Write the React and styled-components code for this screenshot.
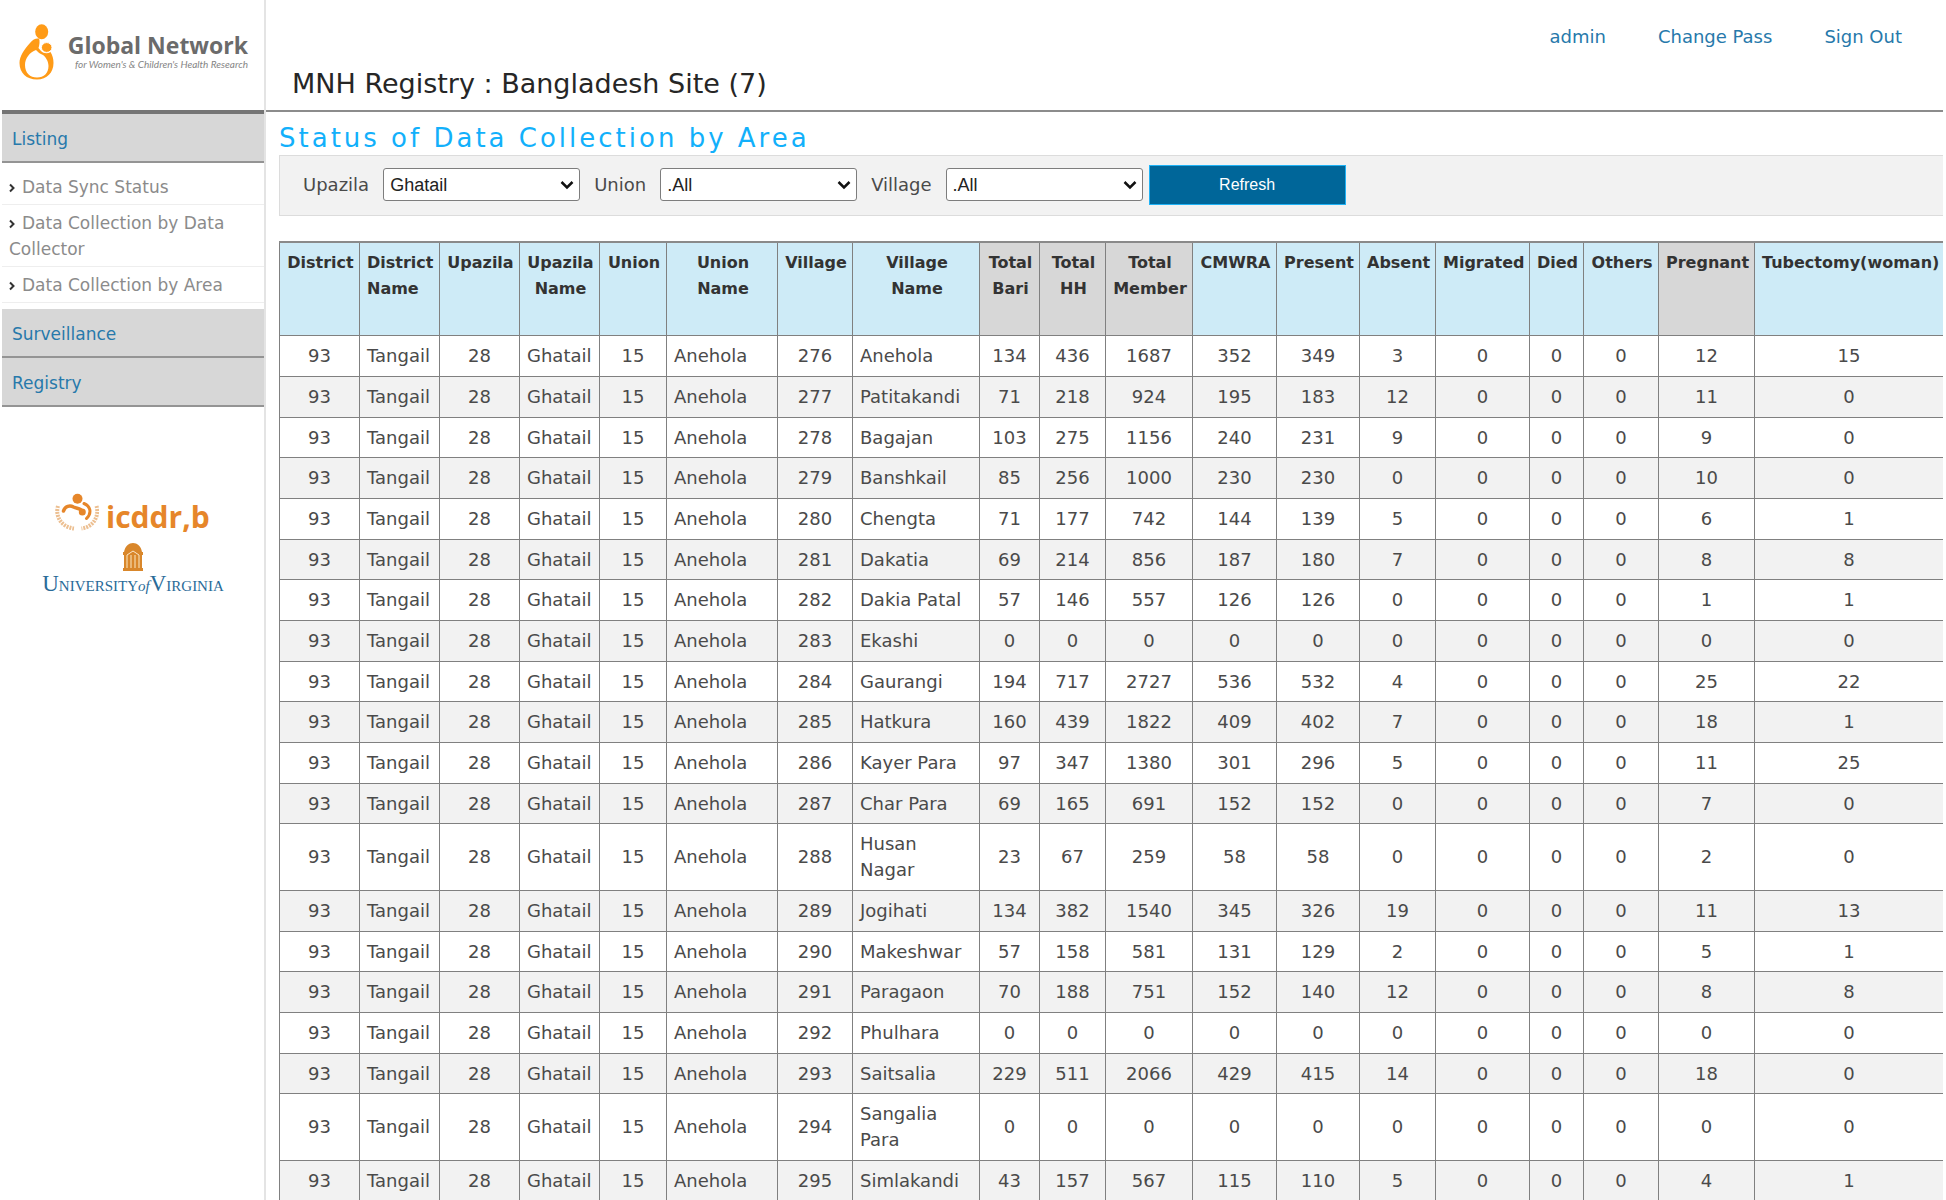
import React from "react";
import styled, { createGlobalStyle } from "styled-components";

const GlobalStyle = createGlobalStyle`
  *, *::before, *::after { box-sizing: border-box; }
  body {
    margin: 0;
    background: #fff;
    color: #4a4a4a;
    font-family: "DejaVu Sans", Verdana, sans-serif;
    font-size: 18px;
    line-height: 26px;
  }
  #root { height: 100vh; overflow: hidden; }
`;

const Page = styled.div`
  display: flex;
  min-height: 100vh;
  padding: 0 3px 0 2px;
`;

const Sidebar = styled.aside`
  flex: none;
  width: 264px;
  border-right: 2px solid #e4e4e4;
  font-size: 17px;
`;

const Brand = styled.div`
  display: flex;
  justify-content: space-between;
  height: 110px;
  padding: 24px 16px 0 17px;

  svg { flex: none; }
`;

const BrandText = styled.div`
  display: flex;
  flex-direction: column;
  align-items: flex-end;
  padding-top: 8px;
  color: #6b6b6b;
  font-family: "Open Sans", "Noto Sans", sans-serif;
  white-space: nowrap;
`;

const BrandName = styled.span`
  font-size: 23px;
  font-weight: 700;
  line-height: 26px;
`;

const BrandTagline = styled.span`
  color: #858585;
  font-family: Lato, "Open Sans", sans-serif;
  font-size: 10px;
  font-style: italic;
  line-height: 12px;
`;

const Menu = styled.nav`
  border-top: 4px solid #757575;
`;

const MenuHead = styled.a`
  display: block;
  height: 49px;
  padding: 12px 10px 9px;
  border-bottom: 2px solid #949494;
  background: #d7d7d7;
  color: #2779ab;
  text-decoration: none;
`;

const SubMenu = styled.ul`
  margin: 0;
  padding: 6px 0;
  list-style: none;
`;

const SubItem = styled.li`
  padding: 5px 7px 4px;
  border-bottom: 1px solid #eee;
`;

const SubLink = styled.a`
  color: #8b8b8b;
  text-decoration: none;
`;

const Chevron = styled.svg`
  width: 6px;
  height: 10px;
  margin-right: 7px;
`;

const Partners = styled.div`
  display: flex;
  flex-direction: column;
  padding: 86px 0 0 45px;
`;

const Icddrb = styled.div`
  display: flex;
  gap: 7px;
  height: 50px;
  padding-left: 8px;
  color: #e6862a;
  font-family: "Open Sans", sans-serif;
  font-size: 30px;
  font-weight: 700;
  line-height: 48px;
`;

const Virginia = styled.div`
  display: flex;
  flex-direction: column;
  width: 172px;
  align-items: center;
  color: #2a6b98;
  font-family: "Liberation Serif", serif;
  font-size: 15px;
  line-height: 26px;
  white-space: nowrap;
`;

const Cap = styled.span`
  font-size: 23px;
`;

const Of = styled.i`
  font-size: 15px;
`;

const Main = styled.main`
  flex: 1;
  min-width: 0;
`;

const TopBar = styled.header`
  display: flex;
  justify-content: space-between;
  height: 112px;
  padding: 0 41px 0 26px;
  border-bottom: 2px solid #8c8c8c;
`;

const SiteTitle = styled.h1`
  align-self: flex-end;
  margin: 0 0 9px;
  color: #262626;
  font-size: 27px;
  font-weight: 400;
  line-height: 34px;
`;

const Account = styled.nav`
  display: flex;
  gap: 52px;
  padding-top: 24px;
`;

const AccountLink = styled.a`
  color: #2779ab;
  text-decoration: none;
`;

const Content = styled.div`
  padding-left: 13px;
`;

const PageTitle = styled.h2`
  margin: 0;
  padding-top: 9px;
  color: #12b0fb;
  font-size: 26px;
  font-weight: 400;
  letter-spacing: 3px;
  line-height: 34px;
`;

const Filters = styled.form`
  display: flex;
  align-items: center;
  height: 61px;
  margin-bottom: 25px;
  padding: 0 23px 2px;
  border: 1px solid #dcdcdc;
  border-right: 0;
  background: #f2f2f2;
`;

const Label = styled.label`
  margin-right: 14px;
`;

const SelectBox = styled.span`
  position: relative;
  width: 197px;
  margin-right: ${(p) => (p.$last ? "6px" : "14px")};
`;

const Select = styled.select`
  display: block;
  width: 100%;
  height: 33px;
  padding: 0 24px 0 6px;
  appearance: none;
  border: 1px solid #7d7d7d;
  border-radius: 3px;
  background: #fff;
  color: #222;
  font: 18px/24px "Liberation Sans", Arial, sans-serif;
`;

const Arrow = styled.svg`
  position: absolute;
  top: 12px;
  right: 6px;
  width: 14px;
  height: 10px;
  pointer-events: none;
`;

const Refresh = styled.button`
  width: 197px;
  height: 40px;
  border: 1px solid #1fb2f5;
  background: #006699;
  color: #fff;
  font: 16px/24px "Liberation Sans", Arial, sans-serif;
`;

const Table = styled.table`
  width: 100%;
  table-layout: fixed;
  border-collapse: collapse;
  border-top: 2px solid #8a8a8a;

  td, th { border-right: 1px solid #808080; border-bottom: 1px solid #808080; }
  td:last-child, th:last-child { border-right: 0; }
  td:first-child, th:first-child { border-left: 1px solid #808080; }
`;

const HeadCell = styled.th`
  height: 93px;
  padding: 7px 5px 7px 7px;
  background: ${(p) => (p.$grey ? "#d7d7d7" : "#ceebf7")};
  color: #333;
  font-size: 16px;
  text-align: ${(p) => (p.$left ? "left" : "center")};
  vertical-align: top;
`;

const Row = styled.tr`
  &:nth-child(even) { background: #f2f2f2; }
  &:nth-child(3n) td { padding-bottom: 6px; }
`;

const Cell = styled.td`
  padding: 7px ${(p) => (p.$left ? "7px" : "0")};
  text-align: ${(p) => (p.$left ? "left" : "center")};
`;

const COLUMNS = [
  { title: "District", width: 80 },
  { title: "District Name", width: 80, left: true, headLeft: true },
  { title: "Upazila", width: 80 },
  { title: "Upazila Name", width: 80, left: true },
  { title: "Union", width: 67 },
  { title: "Union Name", width: 111, left: true },
  { title: "Village", width: 75 },
  { title: "Village Name", width: 127, left: true },
  { title: "Total Bari", width: 60, grey: true },
  { title: "Total HH", width: 66, grey: true },
  { title: "Total Member", width: 87, grey: true },
  { title: "CMWRA", width: 84 },
  { title: "Present", width: 83 },
  { title: "Absent", width: 76 },
  { title: "Migrated", width: 94 },
  { title: "Died", width: 54 },
  { title: "Others", width: 75 },
  { title: "Pregnant", width: 96, grey: true },
  { title: "Tubectomy(woman)" },
];

// village code, village, bari, HH, member, CMWRA, present, absent, migrated, died, others, pregnant, tubectomy
const VILLAGES = [
  [276, "Anehola", 134, 436, 1687, 352, 349, 3, 0, 0, 0, 12, 15],
  [277, "Patitakandi", 71, 218, 924, 195, 183, 12, 0, 0, 0, 11, 0],
  [278, "Bagajan", 103, 275, 1156, 240, 231, 9, 0, 0, 0, 9, 0],
  [279, "Banshkail", 85, 256, 1000, 230, 230, 0, 0, 0, 0, 10, 0],
  [280, "Chengta", 71, 177, 742, 144, 139, 5, 0, 0, 0, 6, 1],
  [281, "Dakatia", 69, 214, 856, 187, 180, 7, 0, 0, 0, 8, 8],
  [282, "Dakia Patal", 57, 146, 557, 126, 126, 0, 0, 0, 0, 1, 1],
  [283, "Ekashi", 0, 0, 0, 0, 0, 0, 0, 0, 0, 0, 0],
  [284, "Gaurangi", 194, 717, 2727, 536, 532, 4, 0, 0, 0, 25, 22],
  [285, "Hatkura", 160, 439, 1822, 409, 402, 7, 0, 0, 0, 18, 1],
  [286, "Kayer Para", 97, 347, 1380, 301, 296, 5, 0, 0, 0, 11, 25],
  [287, "Char Para", 69, 165, 691, 152, 152, 0, 0, 0, 0, 7, 0],
  [288, "Husan Nagar", 23, 67, 259, 58, 58, 0, 0, 0, 0, 2, 0],
  [289, "Jogihati", 134, 382, 1540, 345, 326, 19, 0, 0, 0, 11, 13],
  [290, "Makeshwar", 57, 158, 581, 131, 129, 2, 0, 0, 0, 5, 1],
  [291, "Paragaon", 70, 188, 751, 152, 140, 12, 0, 0, 0, 8, 8],
  [292, "Phulhara", 0, 0, 0, 0, 0, 0, 0, 0, 0, 0, 0],
  [293, "Saitsalia", 229, 511, 2066, 429, 415, 14, 0, 0, 0, 18, 0],
  [294, "Sangalia Para", 0, 0, 0, 0, 0, 0, 0, 0, 0, 0, 0],
  [295, "Simlakandi", 43, 157, 567, 115, 110, 5, 0, 0, 0, 4, 1],
];

const FILTERS = [
  { id: "upazila", label: "Upazila", value: "Ghatail" },
  { id: "union", label: "Union", value: ".All" },
  { id: "village", label: "Village", value: ".All" },
];

const LISTING = ["Data Sync Status", "Data Collection by Data Collector", "Data Collection by Area"];

function MotherChildMark() {
  return (
    <svg width="35" height="57" viewBox="0 0 35 57" aria-hidden="true">
      <ellipse cx="22.700" cy="7.700" rx="6.500" ry="7.500" fill="#ff9b17" />
      <path
        d="M20 14.500C17 14 14 15 11 19 5 26 0.500 32 0.500 39c0 10 7 16.500 17.500 16.500 10 0 16.500-7 16.500-16.500 0-4-1-8-3-11-3 2-7 1.500-9.500-1L19.500 24C20.500 21 21 17 20 14.500z"
        fill="#ff9b17"
      />
      <ellipse cx="27.700" cy="23.500" rx="5.300" ry="4.900" fill="#ff9b17" stroke="#fff" strokeWidth="1" />
      <path d="M17 26c-6 2-11 8-11 15 0 8 5 12.500 12 12.500S29.500 49 29.500 42c0-5-3-9-5.500-11-3-1-5-3-7-5z" fill="#fff" />
    </svg>
  );
}

function WreathMark() {
  return (
    <svg width="44" height="38" viewBox="0 0 44 38" aria-hidden="true" fill="none" stroke="#e6862a">
      <path
        d="M3 13C0 23 6 34 19 35.500M41.500 13c3 10-3 21-15 22.500"
        stroke="#ecbf91"
        strokeWidth="4"
        strokeDasharray="2 1"
      />
      <circle cx="22.500" cy="5.700" r="5" fill="#e6862a" stroke="none" />
      <circle cx="27.300" cy="19" r="3.500" fill="#e6862a" stroke="none" />
      <path d="M8.500 18C10 13 15 12 18.500 14c3 1.500 5 1 7 2.500" strokeWidth="3.500" strokeLinecap="round" />
      <path d="M29 10.500c6 2.500 8.500 9 2.500 15" strokeWidth="3" strokeLinecap="round" />
    </svg>
  );
}

function RotundaMark() {
  return (
    <svg width="20" height="28" viewBox="0 0 20 28" aria-hidden="true" fill="#d9872b">
      <path d="M1 9C2 3 6 0 10 0s8 3 9 9z" />
      <path d="M0 9h20v3H0zM0 25h20v3H0z" />
      <path d="M1 12h18v13H1z" fill="#eab877" />
      <path d="M1 12h2v13H1zM5 12h2v13H5zM9 12h2v13H9zM13 12h2v13h-2zM17 12h2v13h-2z" />
      <path d="M4 12l6-4 6 4" fill="none" stroke="#fbe6c8" />
    </svg>
  );
}

export default function App() {
  return (
    <>
      <GlobalStyle />
      <Page>
        <Sidebar>
          <Brand>
            <MotherChildMark />
            <BrandText>
              <BrandName>Global Network</BrandName>
              <BrandTagline>for Women's &amp; Children's Health Research</BrandTagline>
            </BrandText>
          </Brand>
          <Menu>
            <MenuHead href="#listing">Listing</MenuHead>
            <SubMenu>
              {LISTING.map((item) => (
                <SubItem key={item}>
                  <Chevron viewBox="0 0 6 10" aria-hidden="true">
                    <path d="M1 1.500L4.500 5L1 8.500" fill="none" stroke="#333" strokeWidth="2" />
                  </Chevron>
                  <SubLink href="#item">{item}</SubLink>
                </SubItem>
              ))}
            </SubMenu>
            <MenuHead href="#surveillance">Surveillance</MenuHead>
            <MenuHead href="#registry">Registry</MenuHead>
          </Menu>
          <Partners>
            <Icddrb>
              <WreathMark />
              <span>icddr,b</span>
            </Icddrb>
            <Virginia>
              <RotundaMark />
              <span>
                <Cap>U</Cap>NIVERSITY<Of>of</Of>
                <Cap>V</Cap>IRGINIA
              </span>
            </Virginia>
          </Partners>
        </Sidebar>
        <Main>
          <TopBar>
            <SiteTitle>MNH Registry : Bangladesh Site (7)</SiteTitle>
            <Account>
              <AccountLink href="#admin">admin</AccountLink>
              <AccountLink href="#password">Change Pass</AccountLink>
              <AccountLink href="#signout">Sign Out</AccountLink>
            </Account>
          </TopBar>
          <Content>
            <PageTitle>Status of Data Collection by Area</PageTitle>
            <Filters onSubmit={(e) => e.preventDefault()}>
              {FILTERS.map((f, i) => (
                <React.Fragment key={f.id}>
                  <Label htmlFor={f.id}>{f.label}</Label>
                  <SelectBox $last={i === FILTERS.length - 1}>
                    <Select id={f.id} defaultValue={f.value}>
                      <option>{f.value}</option>
                    </Select>
                    <Arrow viewBox="0 0 14 10" aria-hidden="true">
                      <path d="M1.500 2L7 7.500L12.500 2" fill="none" stroke="#111" strokeWidth="2.500" />
                    </Arrow>
                  </SelectBox>
                </React.Fragment>
              ))}
              <Refresh type="submit">Refresh</Refresh>
            </Filters>
            <Table>
              <colgroup>
                {COLUMNS.map((c) => (
                  <col key={c.title} width={c.width} />
                ))}
              </colgroup>
              <thead>
                <tr>
                  {COLUMNS.map((c) => (
                    <HeadCell key={c.title} scope="col" $grey={c.grey} $left={c.headLeft}>
                      {c.title}
                    </HeadCell>
                  ))}
                </tr>
              </thead>
              <tbody>
                {VILLAGES.map((v) => (
                  <Row key={v[0]}>
                    {[93, "Tangail", 28, "Ghatail", 15, "Anehola", ...v].map((value, i) => (
                      <Cell key={COLUMNS[i].title} $left={COLUMNS[i].left}>
                        {value}
                      </Cell>
                    ))}
                  </Row>
                ))}
              </tbody>
            </Table>
          </Content>
        </Main>
      </Page>
    </>
  );
}
